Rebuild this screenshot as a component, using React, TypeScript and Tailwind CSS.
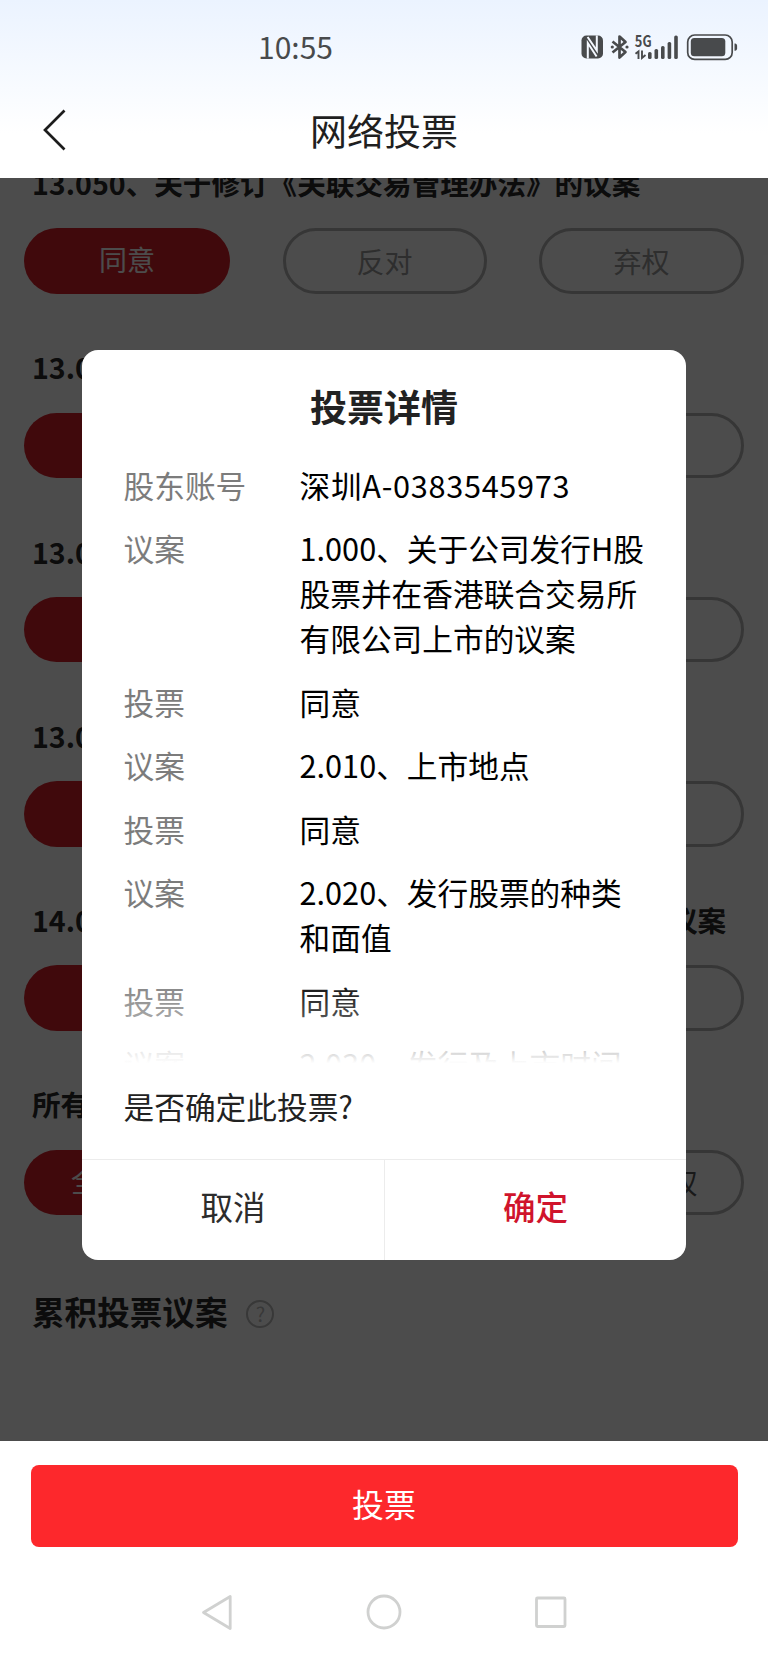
import React from 'react';

interface Proposal {
  title: string;
  options: string[];
  summary?: boolean;
}

interface DetailRow {
  label: string;
  value: string;
  wide?: boolean;
}

const voteOptions = ['同意', '反对', '弃权'];

const proposals: Proposal[] = [
  { title: '13.050、关于修订《关联交易管理办法》的议案', options: voteOptions },
  { title: '13.060', options: ['', '', ''] },
  { title: '13.070', options: ['', '', ''] },
  { title: '13.080', options: ['', '', ''] },
  { title: '14.000、关于聘请公司发行并香港上市审计机构的议案', options: ['', '', ''] },
  { title: '所有议案', options: ['全部同意', '全部反对', '全部弃权'], summary: true },
];

const details: DetailRow[] = [
  { label: '股东账号', value: '深圳A-0383545973', wide: true },
  { label: '议案', value: '1.000、关于公司发行H股\n股票并在香港联合交易所\n有限公司上市的议案' },
  { label: '投票', value: '同意' },
  { label: '议案', value: '2.010、上市地点' },
  { label: '投票', value: '同意' },
  { label: '议案', value: '2.020、发行股票的种类\n和面值' },
  { label: '投票', value: '同意' },
  { label: '议案', value: '2.030、发行及上市时间' },
];

const StatusIcons: React.FC = () => (
  <svg width="160" height="30" viewBox="0 0 160 30" fill="#484a4c">
    {/* NFC */}
    <rect x="3.5" y="3.5" width="21.5" height="23" rx="5" />
    <path d="M9.8 26.5V11L18.6 24.5M9.6 5L18.8 18.5V3.5" fill="none" stroke="#f4f8ff" strokeWidth="2" />
    {/* Bluetooth */}
    <path
      d="M34.5 9.5L47.5 20L41.5 25.5V4.5L47.5 10L34.5 20.5"
      fill="none"
      stroke="#484a4c"
      strokeWidth="2.7"
      strokeLinejoin="round"
    />
    <circle cx="34.3" cy="15" r="1.6" />
    <circle cx="49" cy="15" r="1.6" />
    {/* Mobile signal */}
    <text x="56.8" y="15" fontSize="15.5" fontWeight="700" textLength="16.8" lengthAdjust="spacingAndGlyphs">
      5G
    </text>
    <path d="M57.5 21.8L60.5 19.5V27M64 18.5V26L67.5 23" fill="none" stroke="#484a4c" strokeWidth="1.9" />
    <rect x="70" y="20" width="3.6" height="7" rx="1.6" />
    <rect x="76.5" y="17" width="3.6" height="10" rx="1.6" />
    <rect x="83" y="14" width="3.6" height="13" rx="1.6" />
    <rect x="89.6" y="10" width="3.6" height="17" rx="1.6" />
    <rect x="96.2" y="3.5" width="3.6" height="23.5" rx="1.6" />
    {/* Battery */}
    <rect x="109.7" y="3" width="44.5" height="24.4" rx="7" fill="none" stroke="#484a4c" strokeWidth="1.7" />
    <rect x="112.8" y="6" width="34.5" height="18.2" rx="3.5" />
    <path d="M156.5 11.5h.6c1.2 0 2 1 2 2.4v2.4c0 1.4-.8 2.4-2 2.4h-.6z" />
  </svg>
);

const Header: React.FC = () => (
  <header className="h-[177.5px] bg-linear-to-b from-[#ebf3ff] via-[#f8fbff] to-white to-75%">
    <div className="flex h-[94px] items-center justify-between pl-[258px] pr-[30px]">
      <span className="pb-[3px] text-[30px] leading-none text-[#484a4c]">10:55</span>
      <StatusIcons />
    </div>
    <div className="grid h-[72px] grid-cols-[1fr_auto_1fr] items-center">
      <svg className="ml-[42px]" width="26" height="42" viewBox="0 0 26 42" fill="none">
        <path d="M22.5 1.5L3 21L22.5 40.5" stroke="#1c1c1c" strokeWidth="2.7" />
      </svg>
      <h1 className="text-[37px] leading-none text-[#1f1f1f]">网络投票</h1>
    </div>
  </header>
);

const ProposalItem: React.FC<{ proposal: Proposal }> = ({ proposal }) => (
  <section className="h-[184.25px]">
    <h2 className="h-10 pl-8 text-[28.6px] font-bold leading-[38px] whitespace-nowrap text-[#2b2b2b]">{proposal.title}</h2>
    <div className="mt-[24.25px] grid grid-cols-[206px_204px_205px] justify-between px-6">
      {proposal.options.map((option, index) => (
        <button
          key={index}
          className={
            index === 0
              ? 'h-[65.5px] rounded-full bg-[#d6202a] pb-1 text-[28px] text-white'
              : `h-[65.5px] rounded-full border-3 border-[#b4b4b4] text-[28px] ${
                  proposal.summary ? 'text-[#555555]' : 'text-[#999999]'
                }`
          }
        >
          {option}
        </button>
      ))}
    </div>
  </section>
);

const VoteDialog: React.FC = () => (
  <div className="flex h-[909.5px] w-[604px] flex-col overflow-hidden rounded-2xl bg-white">
    <h2 className="h-[111.7px] text-center text-[37px] font-bold leading-[113px] text-[#222222]">投票详情</h2>
    <div className="relative h-[604.8px] overflow-hidden pl-[41.5px] text-[30.7px] leading-[45.1px]">
      {details.map((row, index) => (
        <div key={index} className="mb-[18.4px] flex">
          <span className="w-[176px] shrink-0 text-[#7c7c7c]">{row.label}</span>
          <span className={`whitespace-pre text-black ${row.wide ? 'tracking-[0.7px]' : ''}`}>{row.value}</span>
        </div>
      ))}
      {/* Fades out the rows at the end of the scroll area */}
      <div className="absolute inset-x-0 bottom-0 h-[92px] bg-linear-to-b from-white/0 via-white/30 via-45% to-white to-97%" />
    </div>
    <p className="h-[93px] pl-[41.5px] text-[30.7px] leading-[80px] text-[#222222]">是否确定此投票?</p>
    <div className="grid flex-1 grid-cols-[303px_1fr] border-t border-[#ececec] text-[32.5px]">
      <button className="border-r border-[#ececec] pb-[7px] text-[#2c2c2c]">取消</button>
      <button className="pb-[7px] font-medium text-[#d0142c]">确定</button>
    </div>
  </div>
);

const NavBar: React.FC = () => (
  <div className="flex justify-center pt-[45px]">
    <svg width="370" height="40" viewBox="0 0 370 40" fill="none" stroke="#d0d1d0" strokeWidth="2.8" strokeLinejoin="round">
      <path d="M31.2 4.5V36.5L4.5 20.5Z" />
      <circle cx="185" cy="20" r="16" />
      <rect x="337.5" y="6" width="28.5" height="28.5" rx="1" />
    </svg>
  </div>
);

const App: React.FC = () => {
  return (
    <div className="h-[1653px] w-[768px] overflow-hidden bg-white font-['Noto_Sans_CJK_SC',sans-serif]">
      <Header />
      <main className="relative h-[1263px] overflow-hidden">
        <div className="-mt-[13.5px]">
          {proposals.map((proposal) => (
            <ProposalItem key={proposal.title} proposal={proposal} />
          ))}
          <div className="flex h-[84px] items-center gap-[19px] pl-8">
            <h2 className="pb-px text-[32.6px] font-bold text-[#2b2b2b]">累积投票议案</h2>
            <span className="mt-1 flex size-7 items-center justify-center rounded-full border-2 border-[#bbbbbb] text-[20px] text-[#bbbbbb]">
              ?
            </span>
          </div>
        </div>
        <div className="absolute inset-0 flex items-start justify-center bg-black/70 pt-[172.5px]">
          <VoteDialog />
        </div>
      </main>
      <footer className="px-[30.5px] pt-[24.5px]">
        <button className="h-[81.5px] w-full rounded-lg bg-[#fd282c] pb-[6px] text-[32px] text-white">投票</button>
        <NavBar />
      </footer>
    </div>
  );
};

export default App;
